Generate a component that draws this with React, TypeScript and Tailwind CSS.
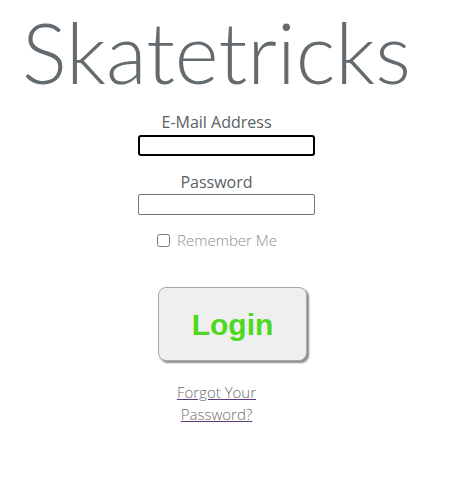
export default function App() {
	return (
		<div className="min-h-[490px] w-[453px] bg-white font-['Open_Sans','Noto_Sans',sans-serif] text-[#636b6f]">
			<h1 className="pl-[22px] pt-[2px] font-['Lato',sans-serif] text-[84px] font-light leading-[100px]">
				Skatetricks
			</h1>
			<form className="mt-[10px] flex flex-col items-center">
				<div className="flex w-[177px] flex-col items-center">
					<label htmlFor="email" className="mr-[20px] text-[16px] font-normal leading-[20px] text-[#5a6165]">
						E-Mail Address
					</label>
					<input
						id="email"
						type="email"
						className="mt-[3px] h-[21px] w-[177px] rounded-[3px] border-2 border-black bg-white px-[2px] text-[13px] outline-none"
					/>
					<label htmlFor="password" className="mr-[20px] mt-[16px] text-[16px] font-normal leading-[20px] text-[#5a6165]">
						Password
					</label>
					<input
						id="password"
						type="password"
						className="mt-[2px] h-[21px] w-[177px] rounded-[2px] border border-[#767676] bg-white px-[2px] text-[13px] outline-none"
					/>
					<label className="mt-[15px] flex items-center self-start pl-[19px] text-[15px] font-light leading-[20px] text-[#8a8f92]">
						<input type="checkbox" className="mr-[7px] h-[13px] w-[13px]" />
						Remember Me
					</label>
				</div>
				<button
					type="submit"
					className="ml-[12px] mt-[37px] h-[74px] w-[149px] rounded-[8px] border border-[#a9a9a9] bg-[#efefef] font-['Liberation_Sans',Arial,sans-serif] text-[30px] font-bold text-[#4cd91f] shadow-[2px_2px_2px_#8a8a8a]"
				>
					Login
				</button>
				<a
					href="#"
					className="mr-[20px] mt-[20px] w-[84px] text-center text-[15px] font-light leading-[22px] text-[#6c6c6c] underline decoration-[#5a3a7a]"
				>
					Forgot Your Password?
				</a>
			</form>
		</div>
	);
}
